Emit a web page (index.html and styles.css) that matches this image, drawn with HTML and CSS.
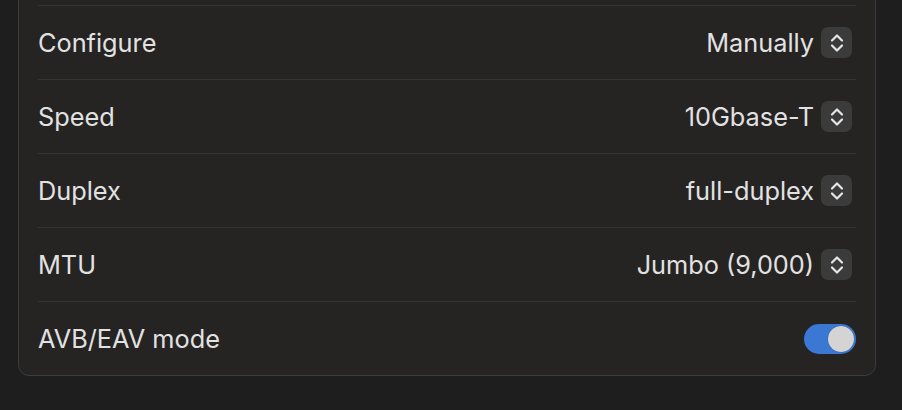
FILE: index.html
```html
<!DOCTYPE html>
<html>
<head>
<meta charset="utf-8">
<link rel="stylesheet" href="styles.css">
</head>
<body>
<div class="card">
  <div class="row">
    <span class="label">Configure</span>
    <div class="control"><span class="value">Manually</span><span class="stepper"><svg width="14" height="20" viewBox="0 0 14 20"><path d="M2 7.5 L7 2.5 L12 7.5 M2 12.5 L7 17.5 L12 12.5" fill="none" stroke="#e6e6e6" stroke-width="2.2" stroke-linecap="round" stroke-linejoin="round"/></svg></span></div>
  </div>
  <div class="row">
    <span class="label">Speed</span>
    <div class="control"><span class="value">10Gbase-T</span><span class="stepper"><svg width="14" height="20" viewBox="0 0 14 20"><path d="M2 7.5 L7 2.5 L12 7.5 M2 12.5 L7 17.5 L12 12.5" fill="none" stroke="#e6e6e6" stroke-width="2.2" stroke-linecap="round" stroke-linejoin="round"/></svg></span></div>
  </div>
  <div class="row">
    <span class="label">Duplex</span>
    <div class="control"><span class="value">full-duplex</span><span class="stepper"><svg width="14" height="20" viewBox="0 0 14 20"><path d="M2 7.5 L7 2.5 L12 7.5 M2 12.5 L7 17.5 L12 12.5" fill="none" stroke="#e6e6e6" stroke-width="2.2" stroke-linecap="round" stroke-linejoin="round"/></svg></span></div>
  </div>
  <div class="row">
    <span class="label">MTU</span>
    <div class="control"><span class="value">Jumbo (9,000)</span><span class="stepper"><svg width="14" height="20" viewBox="0 0 14 20"><path d="M2 7.5 L7 2.5 L12 7.5 M2 12.5 L7 17.5 L12 12.5" fill="none" stroke="#e6e6e6" stroke-width="2.2" stroke-linecap="round" stroke-linejoin="round"/></svg></span></div>
  </div>
  <div class="row">
    <span class="label">AVB/EAV mode</span>
    <div class="control"><span class="toggle"><span class="knob"></span></span></div>
  </div>
</div>
</body>
</html>
```
FILE: styles.css
```css
html, body {
  margin: 0;
  padding: 0;
  background: #1e1e1e;
  overflow: hidden;
}
body {
  width: 902px;
  height: 410px;
  padding: 0 26px 0 18px;
  box-sizing: border-box;
  font-family: Inter, "Liberation Sans", sans-serif;
  color: #e2e2e2;
}
.card {
  margin-top: -30px;
  background: #252423;
  border: 1px solid #3c3c3c;
  border-radius: 11px;
  padding: 34px 19px 0 19px;
}
.row {
  display: flex;
  align-items: center;
  justify-content: space-between;
  height: 73px;
  border-top: 1px solid #343433;
}
.label, .value {
  font-size: 25.3px;
  letter-spacing: 0;
}
.control {
  display: flex;
  align-items: center;
}
.value {
  margin-right: 7px;
}
.stepper {
  width: 31px;
  height: 31px;
  border-radius: 7px;
  background: #3b3b3b;
  display: flex;
  align-items: center;
  justify-content: center;
  margin-right: 4px;
}
.toggle {
  width: 52px;
  height: 30px;
  border-radius: 15px;
  background: #3a78d4;
  display: flex;
  align-items: center;
  justify-content: flex-end;
  padding: 0 2px;
  box-sizing: border-box;
}
.knob {
  width: 26px;
  height: 26px;
  border-radius: 50%;
  background: #d4d4d4;
  box-shadow: 0 0 1px rgba(0,0,0,0.4);
}
```
